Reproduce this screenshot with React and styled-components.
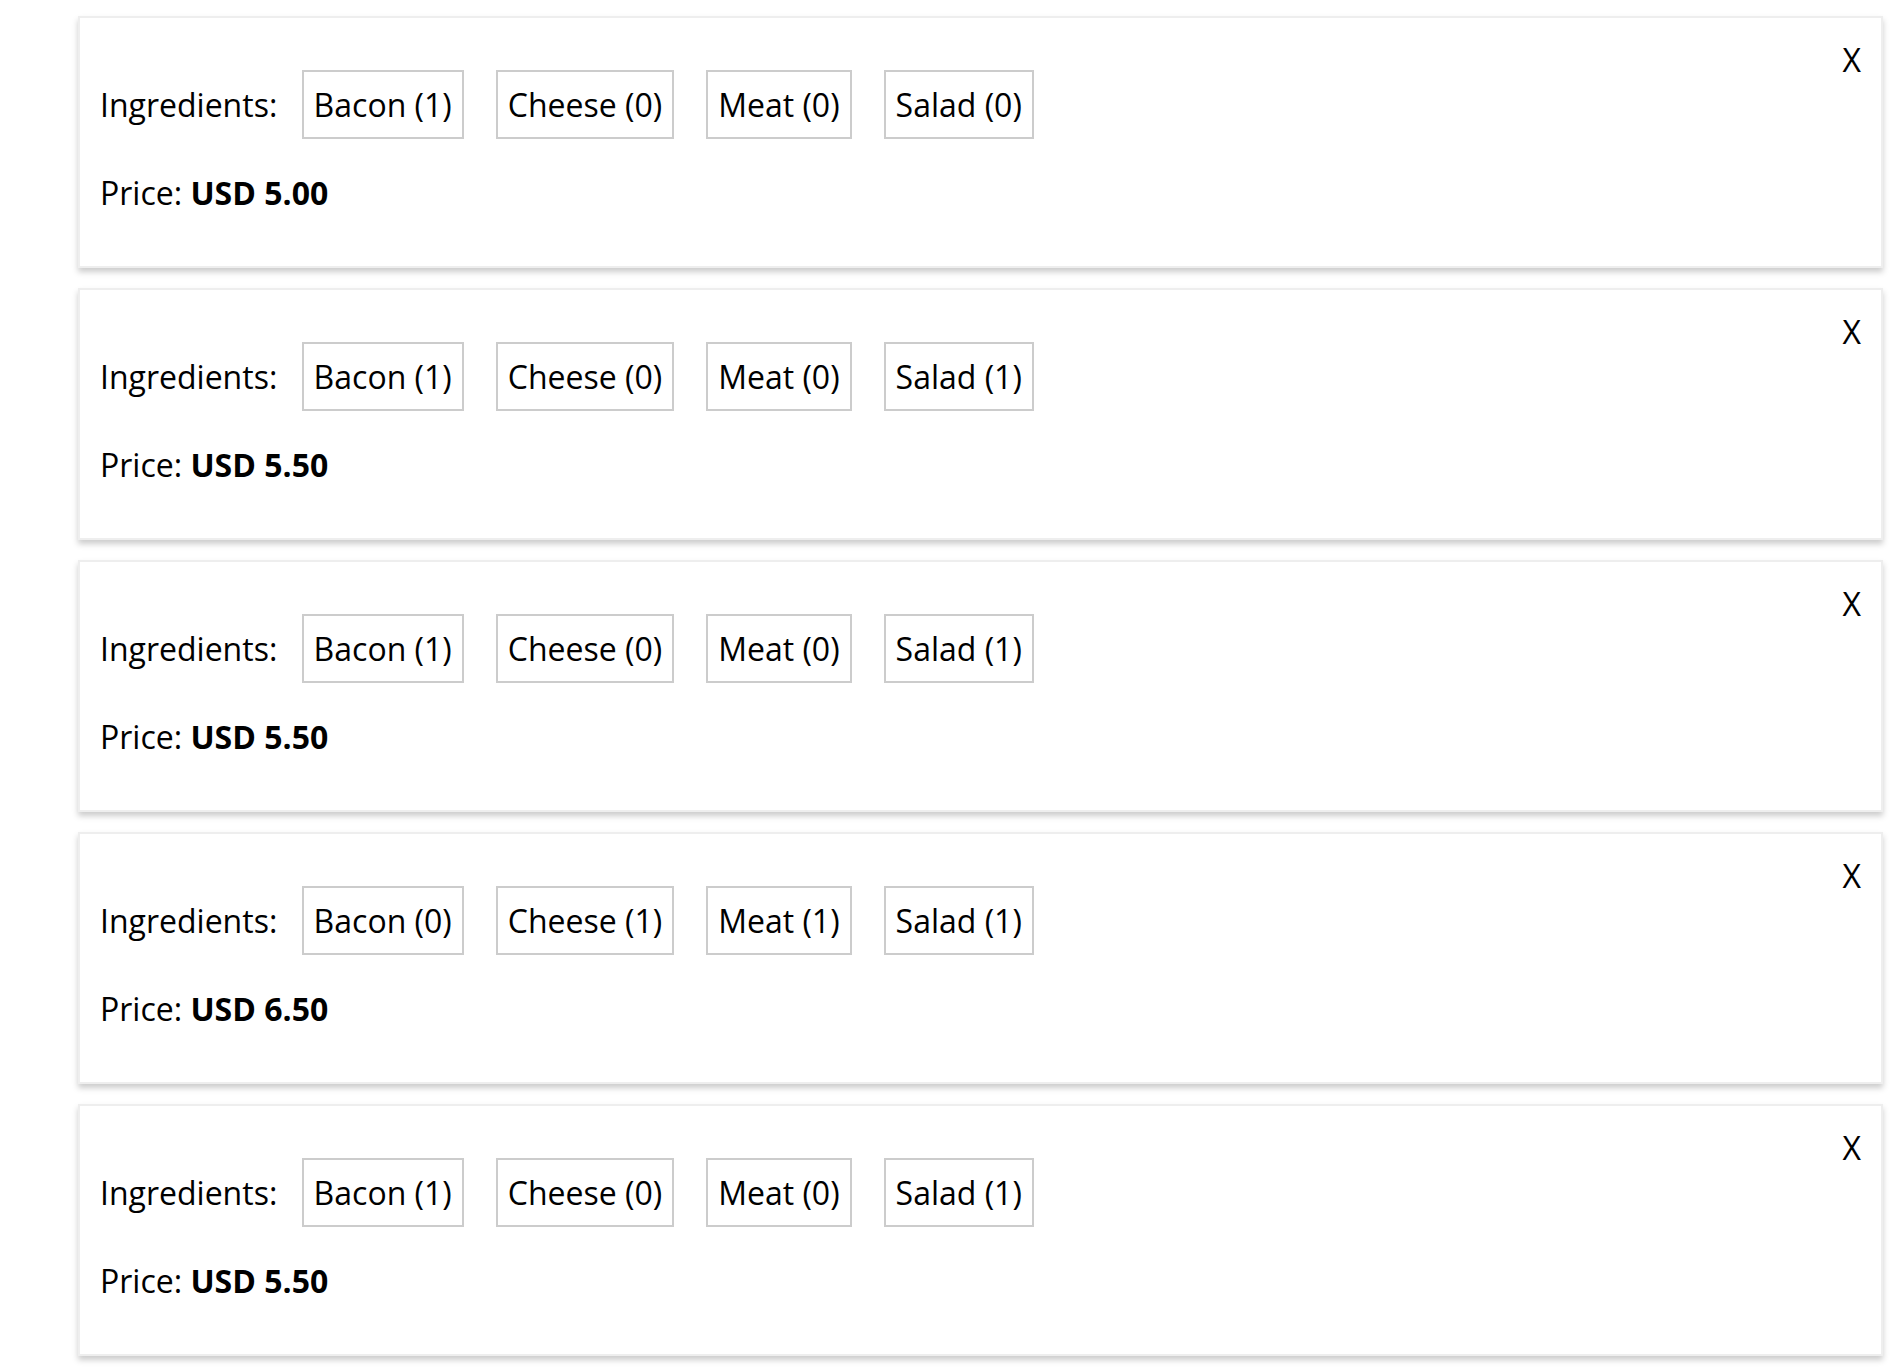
import { createGlobalStyle, styled } from "styled-components";

const GlobalStyle = createGlobalStyle`
  body {
    margin: 0;
    background: #fff;
    font-family: "Open Sans", "Liberation Sans", sans-serif;
    color: #000;
  }
`;

const OrderList = styled.div`
  display: flex;
  flex-direction: column;
  gap: 20px;
  padding: 16px 0 16px 78px;
  width: 1805px;
`;

const Order = styled.div`
  border: 2px solid #eee;
  box-shadow: 0 4px 6px #ccc;
  padding: 20px;
  box-sizing: border-box;
  font-size: 32px;
  background: #fff;
`;

const Close = styled.div`
  float: right;
  cursor: pointer;
`;

const Line = styled.p`
  margin: 32px 0;
`;

const Ingredient = styled.span`
  text-transform: capitalize;
  display: inline-block;
  margin: 0 16px;
  border: 2px solid #ccc;
  padding: 11px 10px;
`;

const orders = [
  { ingredients: { bacon: 1, cheese: 0, meat: 0, salad: 0 }, price: 5 },
  { ingredients: { bacon: 1, cheese: 0, meat: 0, salad: 1 }, price: 5.5 },
  { ingredients: { bacon: 1, cheese: 0, meat: 0, salad: 1 }, price: 5.5 },
  { ingredients: { bacon: 0, cheese: 1, meat: 1, salad: 1 }, price: 6.5 },
  { ingredients: { bacon: 1, cheese: 0, meat: 0, salad: 1 }, price: 5.5 },
];

const App = () => (
  <>
    <GlobalStyle />
    <OrderList>
      {orders.map((order, idx) => (
        <Order key={idx}>
          <Close>X</Close>
          <Line>
            Ingredients:{" "}
            {Object.entries(order.ingredients).map(([name, amount]) => (
              <Ingredient key={name}>
                {name} ({amount})
              </Ingredient>
            ))}
          </Line>
          <Line>
            Price: <strong>USD {order.price.toFixed(2)}</strong>
          </Line>
        </Order>
      ))}
    </OrderList>
  </>
);

export default App;
